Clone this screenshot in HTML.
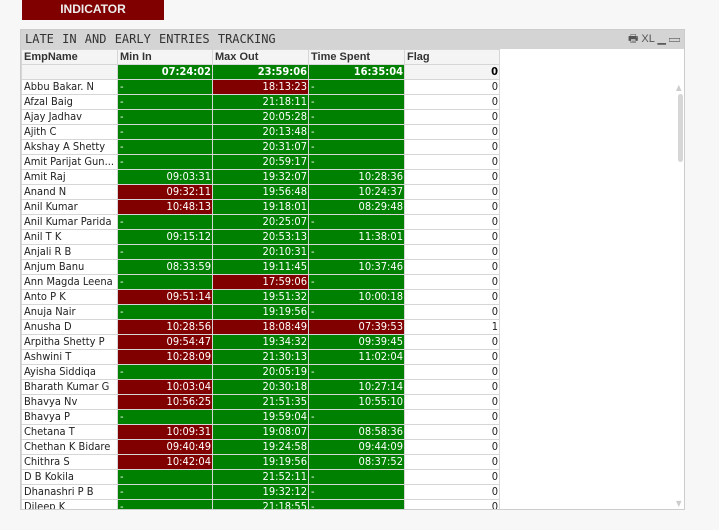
<!DOCTYPE html>
<html><head><meta charset="utf-8"><style>
body{margin:0;width:719px;height:530px;background:#f7f7f7;font-family:"DejaVu Sans Condensed","Liberation Sans",sans-serif;overflow:hidden;position:relative}
.btn{position:absolute;left:22px;top:0;width:142px;height:20px;background:#800000;color:#eee;font:bold 12px "Liberation Sans",sans-serif;text-align:center;line-height:19px}
.panel{position:absolute;left:20px;top:29px;width:665px;height:481px;background:#fff;border:1px solid #ccc;box-sizing:border-box;overflow:hidden}
.title{position:absolute;left:0;top:0;width:665px;height:19px;background:#d4d4d4;font:12px "DejaVu Sans Mono","Liberation Mono",monospace;color:#333;line-height:19px;padding-left:4px;word-spacing:1px}
.icons{position:absolute;right:4px;top:0;font:11px "Liberation Sans",sans-serif;color:#555;line-height:19px}
table{position:absolute;left:0;top:19px;border-collapse:collapse;table-layout:fixed;font-size:11px}
td{height:14px;padding:0 1px 0 2px;border:1px solid #d6d6d6;white-space:nowrap;overflow:hidden;line-height:14px;color:#222}
tr.h td{background:#f4f4f4;font-weight:bold;color:#333;font-family:"Liberation Sans",sans-serif}
tr.t td{font-weight:bold;text-align:right;background:#f4f4f4}
tr.t td.g{background:#008000}
.g{background:#008000;color:#fff!important;text-align:right}
.r{background:#800000;color:#fff!important;text-align:right}
.d{text-align:left!important}
td.f{text-align:right}
.sb{position:absolute;left:657px;top:64px;width:5px;height:68px;background:#d6d6d6;border-radius:3px}
</style></head><body>
<div class="btn">INDICATOR</div>
<div class="panel">
<div class="title">LATE IN AND EARLY ENTRIES TRACKING</div>
<div class="icons">🖶 XL ▁ ▭</div>
<table>
<colgroup><col style="width:96px"><col style="width:95px"><col style="width:96px"><col style="width:96px"><col style="width:95px"></colgroup>
<tr class="h"><td>EmpName</td><td>Min In</td><td>Max Out</td><td>Time Spent</td><td>Flag</td></tr>
<tr class="t"><td></td><td class="g">07:24:02</td><td class="g">23:59:06</td><td class="g">16:35:04</td><td style="color:#000">0</td></tr>
<tr><td>Abbu Bakar. N</td><td class="g d">-</td><td class="r">18:13:23</td><td class="g d">-</td><td class="f">0</td></tr>
<tr><td>Afzal Baig</td><td class="g d">-</td><td class="g">21:18:11</td><td class="g d">-</td><td class="f">0</td></tr>
<tr><td>Ajay Jadhav</td><td class="g d">-</td><td class="g">20:05:28</td><td class="g d">-</td><td class="f">0</td></tr>
<tr><td>Ajith C</td><td class="g d">-</td><td class="g">20:13:48</td><td class="g d">-</td><td class="f">0</td></tr>
<tr><td>Akshay A Shetty</td><td class="g d">-</td><td class="g">20:31:07</td><td class="g d">-</td><td class="f">0</td></tr>
<tr><td>Amit Parijat Gun...</td><td class="g d">-</td><td class="g">20:59:17</td><td class="g d">-</td><td class="f">0</td></tr>
<tr><td>Amit Raj</td><td class="g">09:03:31</td><td class="g">19:32:07</td><td class="g">10:28:36</td><td class="f">0</td></tr>
<tr><td>Anand N</td><td class="r">09:32:11</td><td class="g">19:56:48</td><td class="g">10:24:37</td><td class="f">0</td></tr>
<tr><td>Anil Kumar</td><td class="r">10:48:13</td><td class="g">19:18:01</td><td class="g">08:29:48</td><td class="f">0</td></tr>
<tr><td>Anil Kumar Parida</td><td class="g d">-</td><td class="g">20:25:07</td><td class="g d">-</td><td class="f">0</td></tr>
<tr><td>Anil T K</td><td class="g">09:15:12</td><td class="g">20:53:13</td><td class="g">11:38:01</td><td class="f">0</td></tr>
<tr><td>Anjali R B</td><td class="g d">-</td><td class="g">20:10:31</td><td class="g d">-</td><td class="f">0</td></tr>
<tr><td>Anjum Banu</td><td class="g">08:33:59</td><td class="g">19:11:45</td><td class="g">10:37:46</td><td class="f">0</td></tr>
<tr><td>Ann Magda Leena</td><td class="g d">-</td><td class="r">17:59:06</td><td class="g d">-</td><td class="f">0</td></tr>
<tr><td>Anto P K</td><td class="r">09:51:14</td><td class="g">19:51:32</td><td class="g">10:00:18</td><td class="f">0</td></tr>
<tr><td>Anuja Nair</td><td class="g d">-</td><td class="g">19:19:56</td><td class="g d">-</td><td class="f">0</td></tr>
<tr><td>Anusha D</td><td class="r">10:28:56</td><td class="r">18:08:49</td><td class="r">07:39:53</td><td class="f">1</td></tr>
<tr><td>Arpitha Shetty P</td><td class="r">09:54:47</td><td class="g">19:34:32</td><td class="g">09:39:45</td><td class="f">0</td></tr>
<tr><td>Ashwini T</td><td class="r">10:28:09</td><td class="g">21:30:13</td><td class="g">11:02:04</td><td class="f">0</td></tr>
<tr><td>Ayisha Siddiqa</td><td class="g d">-</td><td class="g">20:05:19</td><td class="g d">-</td><td class="f">0</td></tr>
<tr><td>Bharath Kumar G</td><td class="r">10:03:04</td><td class="g">20:30:18</td><td class="g">10:27:14</td><td class="f">0</td></tr>
<tr><td>Bhavya Nv</td><td class="r">10:56:25</td><td class="g">21:51:35</td><td class="g">10:55:10</td><td class="f">0</td></tr>
<tr><td>Bhavya P</td><td class="g d">-</td><td class="g">19:59:04</td><td class="g d">-</td><td class="f">0</td></tr>
<tr><td>Chetana T</td><td class="r">10:09:31</td><td class="g">19:08:07</td><td class="g">08:58:36</td><td class="f">0</td></tr>
<tr><td>Chethan K Bidare</td><td class="r">09:40:49</td><td class="g">19:24:58</td><td class="g">09:44:09</td><td class="f">0</td></tr>
<tr><td>Chithra S</td><td class="r">10:42:04</td><td class="g">19:19:56</td><td class="g">08:37:52</td><td class="f">0</td></tr>
<tr><td>D B Kokila</td><td class="g d">-</td><td class="g">21:52:11</td><td class="g d">-</td><td class="f">0</td></tr>
<tr><td>Dhanashri P B</td><td class="g d">-</td><td class="g">19:32:12</td><td class="g d">-</td><td class="f">0</td></tr>
<tr><td>Dileep K</td><td class="g d">-</td><td class="g">21:18:55</td><td class="g d">-</td><td class="f">0</td></tr>
</table>
<div style="position:absolute;left:655px;top:53px;font-size:8px;color:#ccc">▲</div>
<div class="sb"></div>
<div style="position:absolute;left:655px;top:469px;font-size:8px;color:#ccc">▼</div>
</div>
</body></html>
